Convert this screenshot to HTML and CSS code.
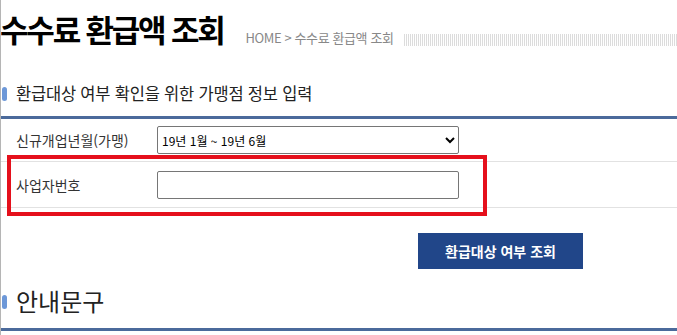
FILE: index.html
```html
<!DOCTYPE html>
<html lang="ko">
<head>
    <meta charset="UTF-8">
    <meta name="viewport" content="width=device-width, initial-scale=1.0">
    <title>수수료 환급액 조회</title>
    <link rel="stylesheet" href="styles.css">
</head>
<body>
    <div class="page">
        <div class="title-bar">
            <h1>수수료 환급액 조회</h1>
            <div class="breadcrumb">HOME &gt; 수수료 환급액 조회</div>
            <div class="stripes"></div>
        </div>

        <h2 class="section-title">환급대상 여부 확인을 위한 가맹점 정보 입력</h2>
        <div class="form-table">
            <div class="form-row">
                <label class="form-label" for="openMonth">신규개업년월(가맹)</label>
                <select id="openMonth" class="form-field">
                    <option>19년 1월 ~ 19년 6월</option>
                </select>
            </div>
            <div class="form-row row-tall">
                <label class="form-label" for="bizNo">사업자번호</label>
                <input type="text" id="bizNo" class="form-field">
            </div>
            <div class="highlight"></div>
        </div>

        <div class="actions">
            <button class="search-btn">환급대상 여부 조회</button>
        </div>

        <h2 class="section-title big">안내문구</h2>
    </div>
</body>
</html>
```

FILE: styles.css
```css
body {
    margin: 0;
    background: #fff;
    font-family: "Noto Sans CJK KR", "Noto Sans", sans-serif;
    color: #222;
}

.page {
    border-left: 1px solid #b5b5b5;
    min-height: 335px;
    overflow: hidden;
}

.title-bar {
    display: flex;
    align-items: flex-end;
    height: 49px;
}

.title-bar h1 {
    margin: 0 0 0 -1px;
    font-size: 31px;
    font-weight: bold;
    letter-spacing: -2.2px;
    line-height: 40px;
    color: #000;
}

.breadcrumb {
    margin-left: 22px;
    font-size: 13px;
    line-height: 14px;
    letter-spacing: -0.4px;
    color: #888;
    padding-bottom: 4px;
}

.stripes {
    flex: 1;
    height: 12px;
    margin: 0 0 3px 10px;
    background: repeating-linear-gradient(90deg, #dcdcdc 0 1px, #fff 1px 2px);
}

.section-title {
    position: relative;
    margin: 31px 0 0;
    padding: 0 0 10px 15px;
    font-size: 16.5px;
    font-weight: normal;
    line-height: 26px;
    letter-spacing: -0.2px;
    color: #222;
    border-bottom: 3px solid #4b6a9b;
}

.section-title::before {
    content: "";
    position: absolute;
    left: 1px;
    top: 7px;
    width: 5px;
    height: 14px;
    border-radius: 3px;
    background: #6d98d8;
}

.section-title.big {
    margin-top: 16px;
    padding-bottom: 11px;
    font-size: 24px;
    line-height: 32px;
    letter-spacing: 0;
}

.section-title.big::before {
    top: 10px;
}

.form-table {
    position: relative;
}

.form-row {
    display: flex;
    align-items: center;
    height: 42px;
    border-bottom: 1px solid #e2e2e2;
}

.row-tall {
    height: 45px;
}

.form-label {
    width: 141px;
    padding-left: 15px;
    font-size: 14px;
    color: #333;
}

.form-field {
    box-sizing: border-box;
    width: 302px;
    height: 28px;
    margin: 0;
    border: 1px solid #767676;
    border-radius: 2px;
    background: #fff;
    font-family: "Noto Sans CJK KR", sans-serif;
    font-size: 12px;
    color: #000;
}

.highlight {
    position: absolute;
    left: 6px;
    top: 36px;
    width: 472px;
    height: 53px;
    border: 4px solid #e5101c;
}

.actions {
    display: flex;
    padding: 25px 0 0 417px;
}

.search-btn {
    width: 165px;
    height: 36px;
    border: none;
    background: #214689;
    color: #fff;
    font-family: "Noto Sans CJK KR", sans-serif;
    font-size: 14px;
    font-weight: bold;
}
```
